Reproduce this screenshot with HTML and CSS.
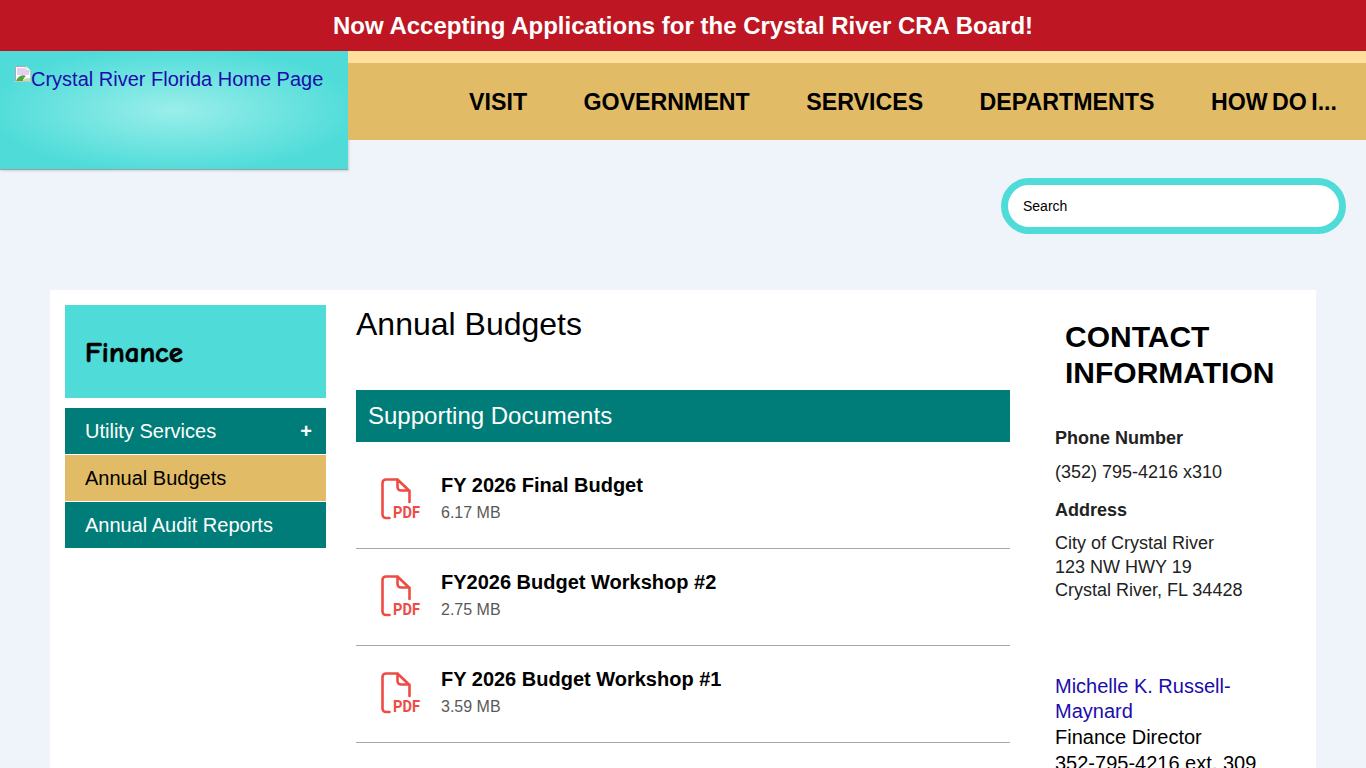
FILE: index.html
```html
<!DOCTYPE html>
<html lang="en">
<head>
<meta charset="utf-8">
<title>Annual Budgets - Crystal River</title>
<link rel="stylesheet" href="styles.css">
</head>
<body>
<div class="banner">Now Accepting Applications for the Crystal River CRA Board!</div>
<header class="header">
  <div class="logo">
    <a href="#" class="logo-link"><svg class="broken" width="16" height="16" viewBox="0 0 16 16"><path d="M0 0H11L16 5V16H0Z" fill="#fff"/><path d="M0.500 15.500V0.500H11" fill="none" stroke="#a9a9a9"/><path d="M2 2H10V5H14V9H2Z" fill="#e6cdf2"/><path d="M1 15C3 10 7 8 11 10C9 11.500 8 13.500 8 15Z" fill="#56a33a"/><path d="M8 15C9 12.500 11.500 11.500 15 12V15Z" fill="#c3dcb4"/><path d="M11 0.500V5H15.500V15.500H1" fill="none" stroke="#c4c4c4"/></svg>Crystal River Florida Home Page</a>
  </div>
  <div class="nav-wrap">
    <div class="nav-strip"></div>
    <nav class="nav">
      <a href="#">VISIT</a>
      <a href="#">GOVERNMENT</a>
      <a href="#">SERVICES</a>
      <a href="#">DEPARTMENTS</a>
      <a href="#">HOW DO I...</a>
    </nav>
  </div>
</header>
<div class="search-row">
  <input class="search" type="text" placeholder="Search" aria-label="Search">
</div>
<main class="panel">
  <aside class="side">
    <h2 class="side-title">Finance</h2>
    <ul class="side-menu">
      <li class="side-item"><span>Utility Services</span><span class="plus">+</span></li>
      <li class="side-item active"><span>Annual Budgets</span></li>
      <li class="side-item"><span>Annual Audit Reports</span></li>
    </ul>
  </aside>
  <section class="content">
    <h1 class="page-title">Annual Budgets</h1>
    <h2 class="docs-head">Supporting Documents</h2>
    <div class="doc">
      <svg class="pdf" width="48" height="48" viewBox="0 0 48 48"><path d="M17.500 1.500H6C4 1.500 2.500 3 2.500 5V36.500C2.500 38.500 4 40 6 40H9.500M17.500 1.500L29.500 13V24M17.500 1.500V9C17.500 11 19 12.500 21 12.500H29.500" class="pdf-line"/><text x="13" y="40" class="pdf-text" textLength="27" lengthAdjust="spacingAndGlyphs">PDF</text></svg>
      <div class="doc-info"><div class="doc-name">FY 2026 Final Budget</div><div class="doc-size">6.17 MB</div></div>
    </div>
    <div class="doc">
      <svg class="pdf" width="48" height="48" viewBox="0 0 48 48"><path d="M17.500 1.500H6C4 1.500 2.500 3 2.500 5V36.500C2.500 38.500 4 40 6 40H9.500M17.500 1.500L29.500 13V24M17.500 1.500V9C17.500 11 19 12.500 21 12.500H29.500" class="pdf-line"/><text x="13" y="40" class="pdf-text" textLength="27" lengthAdjust="spacingAndGlyphs">PDF</text></svg>
      <div class="doc-info"><div class="doc-name">FY2026 Budget Workshop #2</div><div class="doc-size">2.75 MB</div></div>
    </div>
    <div class="doc">
      <svg class="pdf" width="48" height="48" viewBox="0 0 48 48"><path d="M17.500 1.500H6C4 1.500 2.500 3 2.500 5V36.500C2.500 38.500 4 40 6 40H9.500M17.500 1.500L29.500 13V24M17.500 1.500V9C17.500 11 19 12.500 21 12.500H29.500" class="pdf-line"/><text x="13" y="40" class="pdf-text" textLength="27" lengthAdjust="spacingAndGlyphs">PDF</text></svg>
      <div class="doc-info"><div class="doc-name">FY 2026 Budget Workshop #1</div><div class="doc-size">3.59 MB</div></div>
    </div>
  </section>
  <aside class="contact">
    <h2 class="contact-title">CONTACT INFORMATION</h2>
    <div class="label">Phone Number</div>
    <p class="phone">(352) 795-4216 x310</p>
    <div class="label">Address</div>
    <p class="address">City of Crystal River<br>123 NW HWY 19<br>Crystal River, FL 34428</p>
    <div class="person">
      <a href="#">Michelle K. Russell-Maynard</a><br>
      Finance Director<br>
      352-795-4216 ext. 309
    </div>
  </aside>
</main>
</body>
</html>
```

FILE: styles.css
```css
* { box-sizing: border-box; }
html, body { margin: 0; height: 768px; overflow: hidden; }
body { background: #eff4fa; color: #000; font-family: "Liberation Sans", Arial, sans-serif; }
.banner { height: 51px; background: #be1622; color: #fff; font-size: 24px; font-weight: 700; line-height: 51px; text-align: center; }
.header { display: flex; height: 89px; }
.logo { width: 348px; height: 119px; flex: none; background: radial-gradient(ellipse at 50% 50%, #9aeeea 0%, #4fdcd9 75%); border-bottom: 1px solid #8fa5a5; box-shadow: 1px 1px 2px rgba(0, 0, 0, 0.15); padding: 15px 15px; font-size: 20px; line-height: 24px; white-space: nowrap; }
.logo-link { color: #1a0dab; text-decoration: none; }
.broken { vertical-align: 4px; }
.nav-wrap { flex: 1; display: flex; flex-direction: column; }
.nav-strip { height: 12px; background: #ffdf9c; }
.nav { height: 77px; background: #e2bb66; display: flex; justify-content: flex-end; align-items: center; gap: 56.500px; padding: 2px 29px 0 0; }
.nav a { color: #000; text-decoration: none; font-size: 23.200px; font-weight: 700; word-spacing: -2px; }
.search-row { display: flex; justify-content: flex-end; padding: 38px 20px 0 0; height: 150px; }
.search { width: 345px; height: 56px; border: 7px solid #4fdcd9; border-radius: 28px; background: #fff; padding: 0 15px; font: 14px "Liberation Sans", Arial, sans-serif; outline: none; }
.search::placeholder { color: #000; opacity: 1; }
.panel { width: 1266px; margin-left: 50px; background: #fff; padding: 15px; display: flex; height: 600px; }
.side { width: 261px; flex: none; }
.side-title { margin: 0 0 10px; height: 93px; background: #4fdcd9; padding: 1px 20px 0; font: 700 29px/93px "Comic Sans MS", "Comic Neue", cursive; -webkit-text-stroke: 0.700px #000; }
.side-menu { list-style: none; margin: 0; padding: 0; }
.side-item { height: 46px; margin-bottom: 1px; padding: 0 14px 0 20px; background: #007d78; color: #fff; font-size: 20px; display: flex; justify-content: space-between; align-items: center; }
.side-item.active { background: #e2bb66; color: #000; }
.plus { font-size: 20px; font-weight: 700; }
.content { width: 654px; flex: none; margin-left: 30px; }
.page-title { margin: 0; height: 85px; font-size: 32px; font-weight: 400; line-height: 38px; }
.docs-head { margin: 0; height: 52px; background: #007d78; color: #fff; padding: 0 12px; font-size: 24px; font-weight: 400; line-height: 52px; }
.doc { height: 97px; border-bottom: 1px solid #a8a8a8; display: flex; align-items: flex-start; padding: 21px 0 0 24px; }
.docs-head + .doc { height: 107px; padding-top: 31px; }
.pdf { flex: none; margin-top: 5px; }
.pdf-line { fill: none; stroke: #ee4b45; stroke-width: 2.600px; stroke-linecap: round; stroke-linejoin: round; }
.pdf-text { font: 700 16px "Roboto", "Liberation Sans", sans-serif; fill: #ee4b45; }
.doc-info { margin-left: 13px; }
.doc-name { font-size: 20px; font-weight: 700; line-height: 24px; }
.doc-size { font-size: 16px; line-height: 20px; margin-top: 6px; color: #595959; }
.contact { width: 261px; flex: none; margin-left: 30px; padding-left: 15px; font-size: 18px; color: #222; }
.contact-title { margin: 14px 0 35px 10px; font-size: 30px; font-weight: 700; line-height: 36px; color: #000; }
.label { font-weight: 700; line-height: 24px; }
.phone { margin: 10px 0 14px; line-height: 24px; }
.address { margin: 10px 0 0; line-height: 23.500px; }
.person { margin-top: 71px; font-size: 20px; line-height: 25.600px; padding-top: 0.400px; color: #000; }
.person a { color: #1a0dab; text-decoration: none; }
```
